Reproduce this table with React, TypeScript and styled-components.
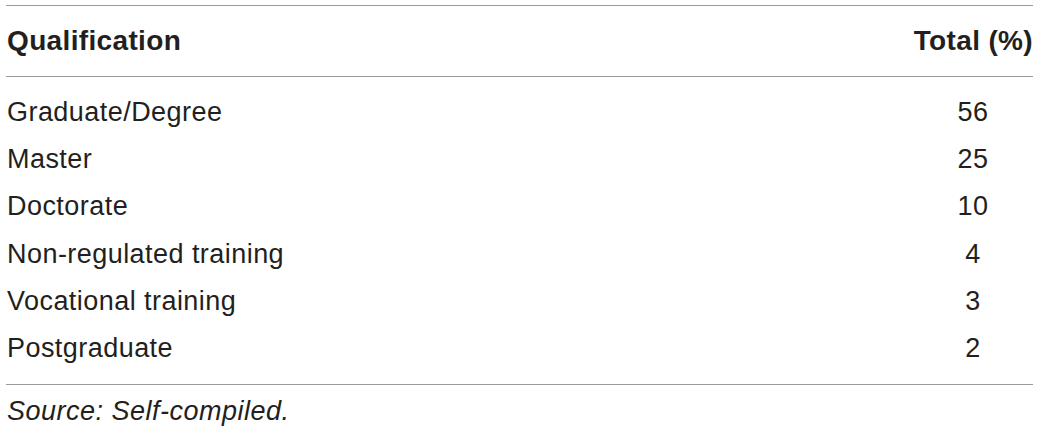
import React from "react";
import styled, { createGlobalStyle } from "styled-components";

const Global = createGlobalStyle`
  html, body { margin: 0; padding: 0; background: #ffffff; }
  body { font-family: "Liberation Sans", Arial, Helvetica, sans-serif; color: #231f20; }
`;

const Wrap = styled.div`
  margin: 5px 0 0 6px;
  width: 1027px;
`;

const Table = styled.div`
  border-top: 1px solid #9a9a9a;
  border-bottom: 1px solid #9a9a9a;
`;

const Row = styled.div<{ $head?: boolean }>`
  display: grid;
  grid-template-columns: 1fr 120px;
  height: ${(p) => (p.$head ? "70px" : "47.2px")};
  line-height: ${(p) => (p.$head ? "70px" : "47.2px")};
  font-size: ${(p) => (p.$head ? "28px" : "27px")};
  font-weight: ${(p) => (p.$head ? 700 : 400)};
  letter-spacing: ${(p) => (p.$head ? "0.35px" : "0.45px")};
  white-space: nowrap;
`;

const Head = styled.div`
  border-bottom: 1px solid #9a9a9a;
`;

const Body = styled.div`
  padding: 12px 0 11.7px;
`;

const Label = styled.div`
  padding-left: 1px;
`;

const Value = styled.div<{ $align: "center" | "right" }>`
  text-align: ${(p) => p.$align};
`;

const Note = styled.div`
  font-size: 27px;
  font-style: italic;
  letter-spacing: 0.5px;
  line-height: 40px;
  padding: 6px 0 0 1px;
  color: #231f20;
`;

const rows: [string, string][] = [
  ["Graduate/Degree", "56"],
  ["Master", "25"],
  ["Doctorate", "10"],
  ["Non-regulated training", "4"],
  ["Vocational training", "3"],
  ["Postgraduate", "2"],
];

export default function App() {
  return (
    <>
      <Global />
      <Wrap>
        <Table>
          <Head>
            <Row $head>
              <Label>Qualification</Label>
              <Value $align="right">Total (%)</Value>
            </Row>
          </Head>
          <Body>
            {rows.map(([q, v]) => (
              <Row key={q}>
                <Label>{q}</Label>
                <Value $align="center">{v}</Value>
              </Row>
            ))}
          </Body>
        </Table>
        <Note>Source: Self-compiled.</Note>
      </Wrap>
    </>
  );
}
